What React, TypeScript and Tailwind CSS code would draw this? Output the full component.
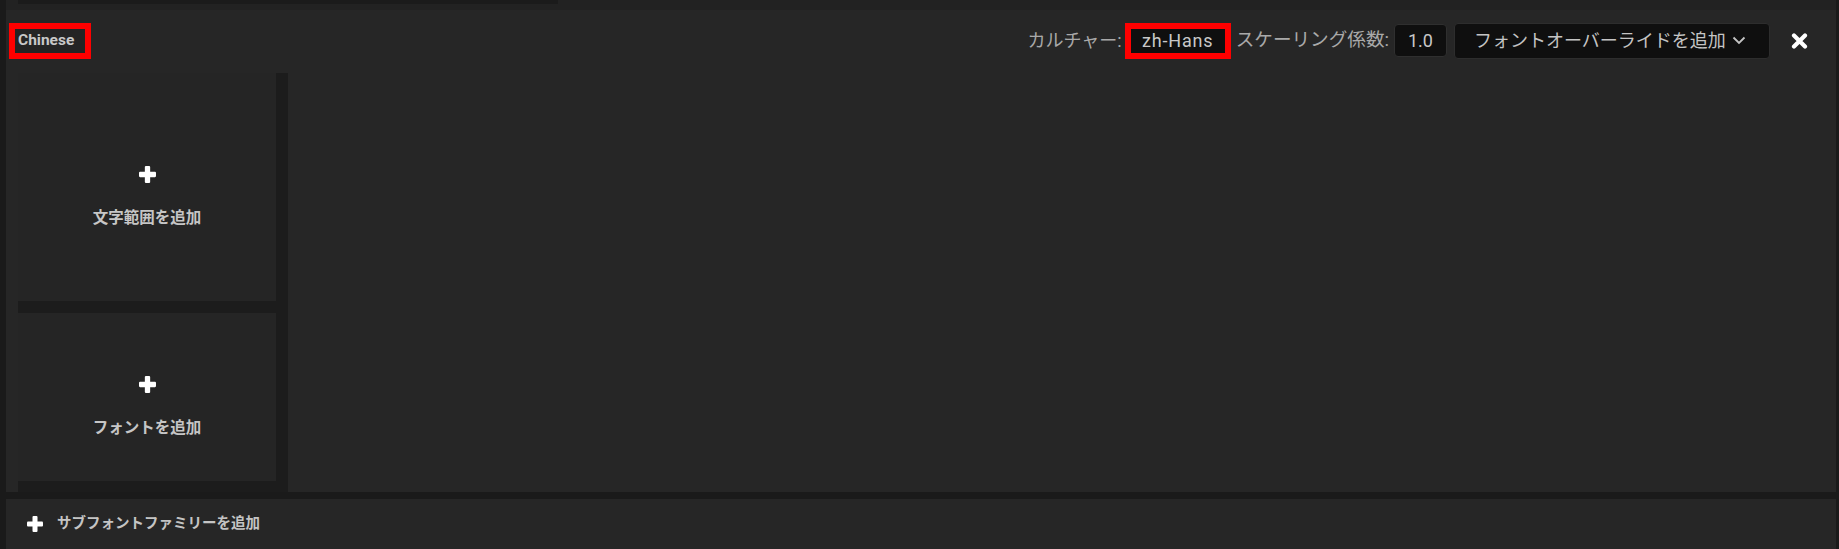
import React from "react";

const font = { fontFamily: "Roboto, 'Noto Sans CJK JP', sans-serif" };

function PlusIcon({ size = 16 }: { size?: number }) {
  return (
    <svg width={size} height={size} viewBox="0 0 16 16" fill="#ffffff">
      <rect x="5.5" y="0" width="5" height="16" rx="1" />
      <rect x="0" y="5.5" width="16" height="5" rx="1" />
    </svg>
  );
}

function CloseIcon() {
  return (
    <svg width="17" height="16" viewBox="0 0 17 16">
      <path d="M3 2.5 L14 13.5 M14 2.5 L3 13.5" stroke="#ffffff" strokeWidth="4.2" strokeLinecap="round" />
    </svg>
  );
}

function Chevron() {
  return (
    <svg width="14" height="9" viewBox="0 0 14 9" fill="none">
      <path d="M1.5 1.5 L7 7 L12.5 1.5" stroke="#c4c4c4" strokeWidth="1.8" />
    </svg>
  );
}

function AddCard({ label, height }: { label: string; height: string }) {
  return (
    <div className={`${height} bg-[#252525] flex flex-col items-center justify-center pt-[18px] gap-[28px]`}>
      <PlusIcon size={17} />
      <span className="text-[15.5px] font-bold text-[#c6c6c6] leading-none">{label}</span>
    </div>
  );
}

export default function App() {
  return (
    <div style={font} className="w-[1839px] h-[549px] bg-[#1a1a1a] pl-[6px] pr-[3px] flex flex-col overflow-hidden">
      {/* tail of previous panel */}
      <div className="h-[10px] bg-[#222222]">
        <div className="ml-[12px] w-[540px] h-[4px] bg-[#1b1b1b]" />
      </div>

      <div className="h-[482px] bg-[#262626] flex flex-col">
        <div className="h-[63px] flex items-center pb-[2px] pl-[3px] pr-[28px]">
          <div className="w-[82px] h-[36px] border-[6px] border-[#ff0000] bg-[#242424] flex items-center pl-[3px]">
            <span className="text-[15.5px] font-bold text-[#c8c8c8] leading-none">Chinese</span>
          </div>

          <div className="ml-auto flex items-center">
            <span className="text-[18px] text-[#a9a9a9] leading-none">カルチャー:</span>
            <div className="ml-[3px] w-[106px] h-[36px] border-[6px] border-[#ff0000] bg-[#0f0f0f] flex items-center justify-center">
              <span className="text-[18px] text-[#c8c8c8] leading-none tracking-[0.8px]">zh-Hans</span>
            </div>
            <span className="ml-[5px] text-[18.6px] text-[#a9a9a9] leading-none">スケーリング係数:</span>
            <div className="ml-[5px] w-[53px] h-[33px] rounded-[4px] bg-[#0f0f0f] border border-[#2f2f2f] flex items-center justify-center">
              <span className="text-[18px] text-[#c8c8c8] leading-none">1.0</span>
            </div>
            <div className="ml-[7px] w-[316px] h-[36px] rounded-[4px] bg-[#0f0f0f] border border-[#2d2d2d] flex items-center pl-[19px] pr-[23px]">
              <span className="text-[18px] text-[#c4c4c4] leading-none">フォントオーバーライドを追加</span>
              <span className="ml-auto">
                <Chevron />
              </span>
            </div>
            <div className="ml-[21px]">
              <CloseIcon />
            </div>
          </div>
        </div>

        <div className="flex-1 flex">
          <div className="ml-[12px] w-[270px] bg-[#1c1c1c] pr-[12px] flex flex-col gap-[12px]">
            <AddCard label="文字範囲を追加" height="h-[228px]" />
            <AddCard label="フォントを追加" height="h-[168px]" />
          </div>
          <div className="flex-1 bg-[#262626]" />
        </div>
      </div>

      <div className="h-[7px]" />

      <div className="h-[50px] bg-[#262626] flex items-center pl-[21px] gap-[14px]">
        <PlusIcon size={16} />
        <span className="text-[14.5px] font-bold text-[#c4c4c4] leading-none">サブフォントファミリーを追加</span>
      </div>
    </div>
  );
}
